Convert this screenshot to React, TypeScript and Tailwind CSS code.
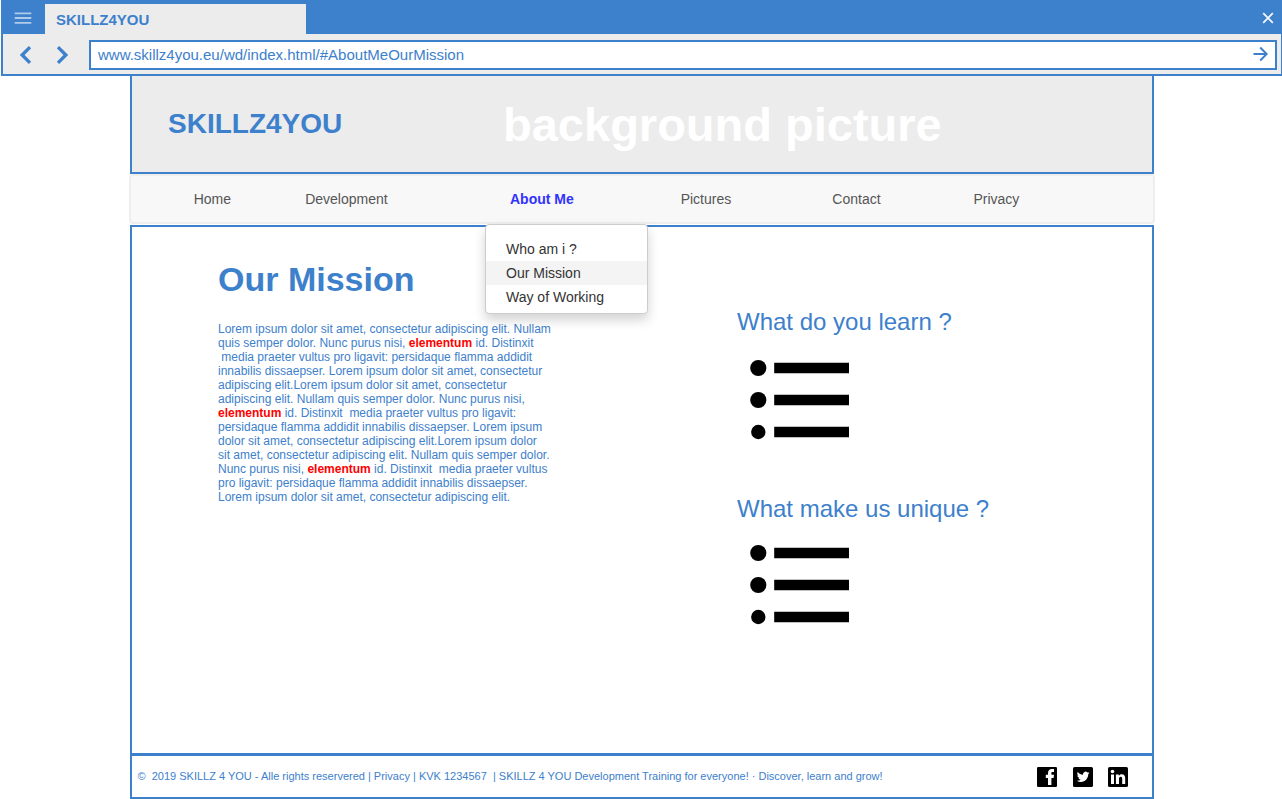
import React from 'react';

function TitleBar() {
  return (
    <div className="flex h-[34px] bg-[#3d80cc]">
      <div className="w-[42px] shrink-0 pt-3 pl-[11px]">
        <svg width="18" height="12" viewBox="0 0 18 12" fill="none" stroke="#b1cceb" strokeWidth="1.8">
          <path d="M.7 1.3h16.6M.7 6h16.6M.7 10.9h16.6" />
        </svg>
      </div>
      <div className="mt-1 w-[261px] bg-[#ececec] pl-[11px] text-[15px] leading-8 font-bold">SKILLZ4YOU</div>
      <svg width="12" height="12" viewBox="0 0 12 12" className="mt-3 mr-[7px] ml-auto" fill="none" stroke="#f4f8fc" strokeWidth="1.8">
        <path d="M1.2 1.2l9.6 9.6M10.8 1.2L1.2 10.8" />
      </svg>
    </div>
  );
}

function Toolbar() {
  return (
    <div className="flex h-10 items-center bg-[#ececec] pr-1">
      <svg width="12" height="18" viewBox="0 0 12 18" className="mt-0.5 ml-[17px]" fill="none" stroke="#3d80cc" strokeWidth="3.3">
        <path d="M10 1.2L2.2 9l7.8 7.8" />
      </svg>
      <svg width="12" height="18" viewBox="0 0 12 18" className="mt-0.5 ml-6" fill="none" stroke="#3d80cc" strokeWidth="3.3">
        <path d="M2 1.2L9.8 9 2 16.8" />
      </svg>
      <div className="mt-0.5 ml-[21px] flex h-[30px] flex-1 items-center border-2 border-[#3d80cc] bg-white pr-[7px] pl-[7px] text-[15px]">
        <span>www.skillz4you.eu/wd/index.html/#AboutMeOurMission</span>
        <svg width="15" height="16" viewBox="0 0 15 16" className="-mt-0.5 ml-auto" fill="none" stroke="#3d80cc" strokeWidth="2">
          <path d="M.5 8h13.2M7.2 1.5L13.7 8l-6.5 6.5" />
        </svg>
      </div>
    </div>
  );
}

function Dropdown() {
  return (
    <div className="absolute top-[47.5px] left-[353.5px] z-10 w-[163px] rounded border border-[#ccc] bg-white pt-[12.5px] pb-1 text-[14px] leading-6 text-[#333] shadow-[0_6px_12px_rgba(0,0,0,0.175)]">
      <div className="pl-[20.5px]">Who am i ?</div>
      <div className="bg-[#f4f4f4] pl-[20.5px]">Our Mission</div>
      <div className="pl-[20.5px]">Way of Working</div>
    </div>
  );
}

function Nav() {
  return (
    <nav className="relative -mx-px flex h-[50px] rounded border-2 border-[#eeeeee] bg-[#f8f8f8] text-[14px] leading-[46px] text-[#555]">
      <span className="ml-[62.7px] w-[111.5px]">Home</span>
      <span className="w-[204.8px]">Development</span>
      <span className="w-[170.7px] font-bold text-[#3333ff]">About Me</span>
      <span className="w-[151.7px]">Pictures</span>
      <span className="w-[141.1px]">Contact</span>
      <span>Privacy</span>
      <Dropdown />
    </nav>
  );
}

function Em() {
  return <b className="text-[#ff0000]">elementum</b>;
}

function BulletList() {
  return (
    <svg width="100" height="82" viewBox="0 0 100 82" fill="#000">
      <circle cx="8.3" cy="9" r="8.1" />
      <circle cx="8.3" cy="41" r="8.1" />
      <circle cx="8.3" cy="73" r="7.2" />
      <path d="M24.2 3.7H99v10.6H24.2zM24.2 35.7H99v10.6H24.2zM24.2 67.7H99v10.6H24.2z" />
    </svg>
  );
}

function Content() {
  return (
    <main className="mt-px flex h-[530px] border-2 border-[#3d80cc] bg-white">
      <section className="w-[519px] pt-[30px] pl-[86px]">
        <h1 className="text-[34px] leading-[44px] font-bold">Our Mission</h1>
        <p className="mt-[21px] text-[12px] leading-[14px] whitespace-pre">
          Lorem ipsum dolor sit amet, consectetur adipiscing elit. Nullam<br />
          quis semper dolor. Nunc purus nisi, <Em /> id. Distinxit<br />
          {' media praeter vultus pro ligavit: persidaque flamma addidit'}<br />
          innabilis dissaepser. Lorem ipsum dolor sit amet, consectetur<br />
          adipiscing elit.Lorem ipsum dolor sit amet, consectetur<br />
          adipiscing elit. Nullam quis semper dolor. Nunc purus nisi,<br />
          <Em />{' id. Distinxit  media praeter vultus pro ligavit:'}<br />
          persidaque flamma addidit innabilis dissaepser. Lorem ipsum<br />
          dolor sit amet, consectetur adipiscing elit.Lorem ipsum dolor<br />
          sit amet, consectetur adipiscing elit. Nullam quis semper dolor.<br />
          Nunc purus nisi, <Em />{' id. Distinxit  media praeter vultus'}<br />
          pro ligavit: persidaque flamma addidit innabilis dissaepser.<br />
          Lorem ipsum dolor sit amet, consectetur adipiscing elit.
        </p>
      </section>
      <section className="pt-[79px] pl-[86px]">
        <h2 className="text-[24px] leading-8">What do you learn ?</h2>
        <div className="mt-[21px] ml-[13px]"><BulletList /></div>
        <h2 className="mt-[52px] text-[24px] leading-8">What make us unique ?</h2>
        <div className="mt-[19px] ml-[13px]"><BulletList /></div>
      </section>
    </main>
  );
}

function Footer() {
  return (
    <footer className="-mt-px flex h-[45px] items-center border-2 border-[#3d80cc] bg-white pr-6 pl-[5.5px] text-[11px]">
      <span className="whitespace-pre">
        {'©  2019 SKILLZ 4 YOU - Alle rights reservered | Privacy | KVK 1234567  | SKILLZ 4 YOU Development Training for everyone! · Discover, learn and grow!'}
      </span>
      <svg width="20" height="20" viewBox="0 0 20 20" className="mt-px ml-auto">
        <rect width="20" height="20" rx="1.3" fill="#000" />
        <path d="M11 18v-7H8.8V7.8H11V6C11 3.4 12.6 1.9 15 1.9h2v3.2h-1.4c-1 0-1.2.5-1.2 1.2v1.5H17l-.4 3.2h-2.2v7z" fill="#fff" />
      </svg>
      <svg width="20" height="20" viewBox="0 0 20 20" className="mt-px ml-4">
        <rect width="20" height="20" rx="1.6" fill="#000" />
        <path transform="translate(3.8 3.4) scale(.53)" d="M23.95 4.57a10 10 0 0 1-2.82.77 4.96 4.96 0 0 0 2.16-2.72c-.95.55-2 .95-3.13 1.18a4.92 4.92 0 0 0-8.38 4.48C7.69 8.1 4.07 6.13 1.64 3.16a4.82 4.82 0 0 0-.67 2.48c0 1.7.87 3.2 2.19 4.1a4.9 4.9 0 0 1-2.23-.62v.06a4.92 4.92 0 0 0 3.95 4.83 5 5 0 0 1-2.21.08 4.94 4.94 0 0 0 4.6 3.42A9.87 9.87 0 0 1 0 19.54a14 14 0 0 0 7.55 2.21c9.05 0 14-7.5 14-13.98 0-.21 0-.42-.02-.63a9.94 9.94 0 0 0 2.46-2.55z" fill="#fff" />
      </svg>
      <svg width="20" height="20" viewBox="0 0 20 20" className="mt-px ml-[15px]">
        <rect width="20" height="20" rx="1.6" fill="#000" />
        <circle cx="4.5" cy="4.5" r="1.8" fill="#fff" />
        <path d="M3 7.6h3V17H3zM7.9 7.6h2.9v1.3c.6-1 1.6-1.6 3-1.6 2.6 0 3.4 1.7 3.4 4.1V17h-3v-5c0-1.3-.2-2.2-1.4-2.2-1.3 0-1.8.9-1.8 2.2v5H7.9z" fill="#fff" />
      </svg>
    </footer>
  );
}

export default function App() {
  return (
    <div className="h-[799px] w-[1282px] overflow-hidden bg-white font-['Liberation_Sans',Arial,sans-serif] text-[#3d80cc]">
      <div className="ml-px h-[76px] border-r border-b-2 border-l-2 border-[#3d80cc]">
        <TitleBar />
        <Toolbar />
      </div>
      <div className="ml-[130px] w-[1024px]">
        <header className="flex h-[98px] items-center border-x-2 border-b-2 border-[#3d80cc] bg-[#ececec]">
          <span className="w-[335px] pl-9 text-[28px] leading-8 font-bold">SKILLZ4YOU</span>
          <span className="ml-9 text-[47px] leading-[47px] font-bold text-white">background picture</span>
        </header>
        <Nav />
        <Content />
        <Footer />
      </div>
    </div>
  );
}
